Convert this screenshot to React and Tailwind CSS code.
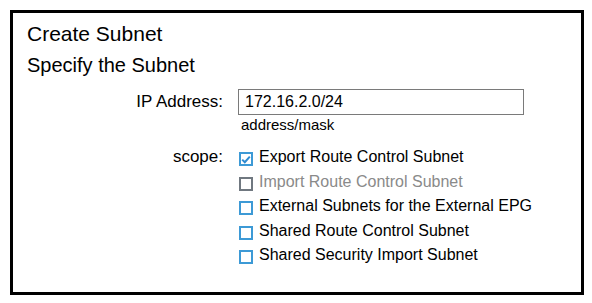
import React from "react";

const SCOPES = [
  { label: "Export Route Control Subnet", checked: true },
  { label: "Import Route Control Subnet", disabled: true },
  { label: "External Subnets for the External EPG" },
  { label: "Shared Route Control Subnet" },
  { label: "Shared Security Import Subnet" },
];

const Box = ({ checked, disabled }) => (
  <span
    className={`mt-[7px] flex h-[14px] w-[14px] shrink-0 items-center justify-center border-[2px] bg-white ${
      disabled ? "border-[#707880]" : "border-[#3d9ad6]"
    }`}
  >
    {checked && (
      <svg width="10" height="9" viewBox="0 0 10 9">
        <path d="M1.2 4.6 L3.8 7.2 L8.8 1.6" fill="none" stroke="#2f8bd0" strokeWidth="2" />
      </svg>
    )}
  </span>
);

export default function App() {
  return (
    <div className="p-[10px] font-['Liberation_Sans',Arial,sans-serif] text-black">
      <div className="h-[285px] w-[574px] border-[3px] border-black bg-white pl-[14px] pt-[9px]">
        <div className="text-[21px] leading-[24px]">Create Subnet</div>
        <div className="mt-[7px] text-[20px] leading-[24px]">Specify the Subnet</div>

        {/* IP address */}
        <div className="mt-[12px] flex items-start">
          <div className="w-[196px] text-right text-[17px] leading-[26px]">IP Address:</div>
          <div className="ml-[15px]">
            <div className="h-[26px] w-[286px] border border-[#7a7a7a] px-[6px] text-[16px] leading-[24px]">
              172.16.2.0/24
            </div>
            <div className="mt-[1px] pl-[3px] text-[15px] leading-[18px]">address/mask</div>
          </div>
        </div>

        {/* scope */}
        <div className="mt-[11px] flex items-start">
          <div className="w-[196px] text-right text-[17px] leading-[24.5px]">scope:</div>
          <div className="ml-[16px] flex flex-col">
            {SCOPES.map((s) => (
              <div key={s.label} className="flex h-[24.5px] items-start">
                <Box checked={s.checked} disabled={s.disabled} />
                <span
                  className={`ml-[6px] text-[16px] leading-[24.5px] ${
                    s.disabled ? "text-[#8a8a8a]" : "text-black"
                  }`}
                >
                  {s.label}
                </span>
              </div>
            ))}
          </div>
        </div>
      </div>
    </div>
  );
}
